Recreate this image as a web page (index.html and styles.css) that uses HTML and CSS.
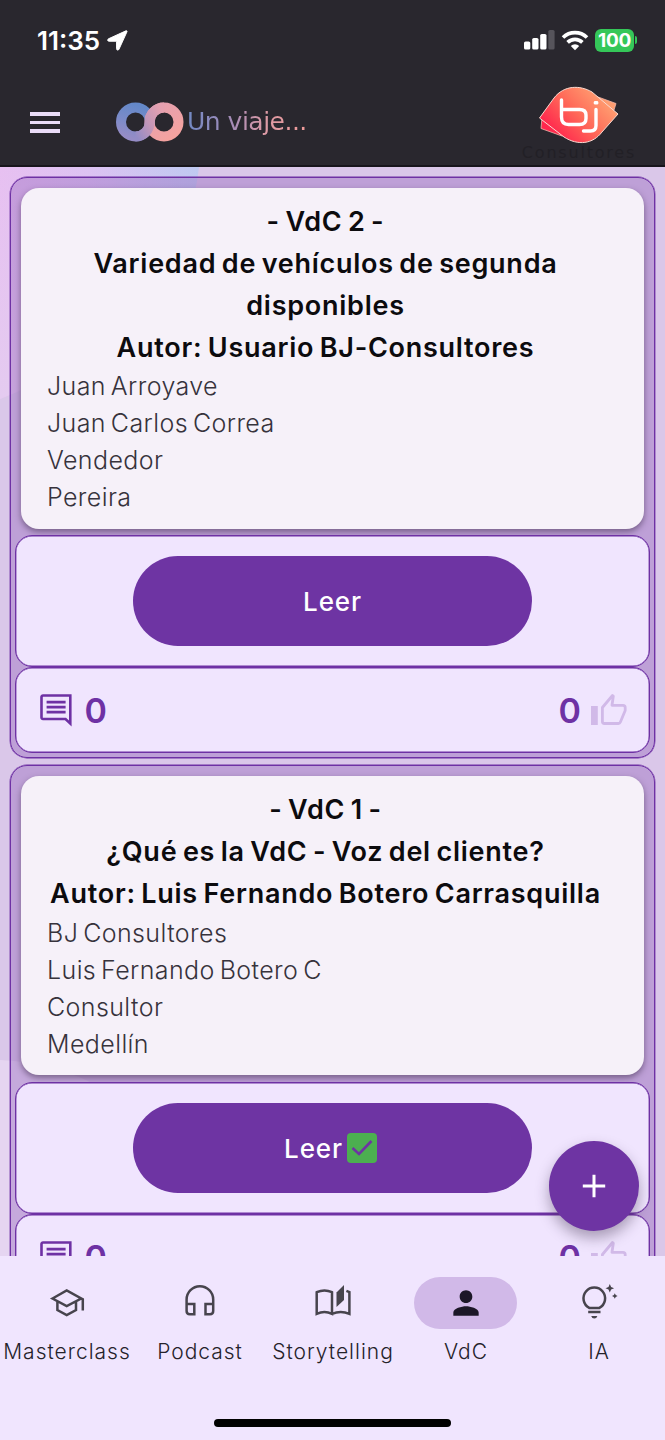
FILE: index.html
```html
<!DOCTYPE html>
<html lang="es">
<head>
<meta charset="utf-8">
<title>VdC</title>
<link rel="stylesheet" href="styles.css">
</head>
<body>
<div class="screen">
  <header class="top">
    <div class="status">
      <span class="time">11:35</span>
      <svg class="loc" width="21" height="21" viewBox="0 0 22 22"><path d="M19.800.9 1.600 9.200c-1.500.8-1.100 2.600.6 2.600h7.200q.6 0 .6.600v7.200c0 1.700 1.900 2 2.600.5L20.900 1.900c.4-.8-.3-1.400-1.100-1z" fill="#fff" stroke="#fff" stroke-width="1"/></svg>
      <span class="grow"></span>
      <svg class="signal" width="31" height="20" viewBox="0 0 31 20"><g fill="#fff"><rect x="0" y="11.500" width="6.300" height="8" rx="1.600"/><rect x="8.200" y="8" width="6.300" height="11.500" rx="1.600"/><rect x="16.200" y="4" width="6.300" height="15.500" rx="1.600"/></g><rect x="24.300" y="0" width="6.300" height="19.500" rx="1.600" fill="#56545b"/></svg>
      <svg class="wifi" width="28" height="21" viewBox="0 0 28 21"><g fill="none" stroke="#fff" stroke-width="3.600"><path d="M2 7.600a17 17 0 0 1 24 0"/><path d="M6.600 12.400a10.500 10.500 0 0 1 14.800 0"/></g><path d="M14 20.300 9.800 16a6 6 0 0 1 8.400 0z" fill="#fff"/></svg>
      <span class="battery">100</span><span class="cap"></span>
    </div>
    <div class="bar">
      <div class="menu"><i></i><i></i><i></i></div>
      <svg class="loop" width="68" height="40" viewBox="0 0 68 40">
        <defs>
          <linearGradient id="g0" x1="24" y1="4" x2="14" y2="36" gradientUnits="userSpaceOnUse"><stop offset="0" stop-color="#6488c8"/><stop offset=".5" stop-color="#7a8bc9"/><stop offset="1" stop-color="#968cc6"/></linearGradient>
          <linearGradient id="g1" x1="40" y1="4" x2="60" y2="36" gradientUnits="userSpaceOnUse"><stop offset="0" stop-color="#e5a1b0"/><stop offset="1" stop-color="#f6a29e"/></linearGradient>
          <linearGradient id="g2" x1="18" y1="30" x2="48" y2="12" gradientUnits="userSpaceOnUse"><stop offset="0" stop-color="#948cc6"/><stop offset=".5" stop-color="#c597b8"/><stop offset="1" stop-color="#e5a1b0"/></linearGradient>
        </defs>
        <circle cx="19.500" cy="20" r="14.500" fill="none" stroke="url(#g0)" stroke-width="10"/>
        <circle cx="48" cy="20" r="14.500" fill="none" stroke="url(#g1)" stroke-width="10"/>
        <path d="M19.500 34.500c8 0 14.200-6.500 14.200-14.500S40 5.500 48 5.500" fill="none" stroke="url(#g2)" stroke-width="10"/>
      </svg>
      <span class="brand">Un viaje...</span>
      <span class="grow"></span>
      <div class="logo">
        <svg width="82" height="60" viewBox="0 0 82 60">
          <defs><linearGradient id="g3" x1="18" y1="50" x2="62" y2="8" gradientUnits="userSpaceOnUse"><stop offset="0" stop-color="#ff264d"/><stop offset=".5" stop-color="#ff6858"/><stop offset="1" stop-color="#ff9d70"/></linearGradient></defs>
          <path d="M4 31 56 9.500l22 8-4 13L24 50 3 42.500z" fill="url(#g3)" stroke="#f0b5a8" stroke-width=".8"/>
          <path d="M1.500 32 16 12C26-1 42-1 54 6l26 22-16 18c-9 12-24 14-38 5z" fill="url(#g3)" stroke="#f9d9d0" stroke-width="1"/>
          <g fill="none" stroke="#fff" stroke-width="3.400" stroke-linecap="round" stroke-linejoin="round"><path d="M23.500 14v17q0 7.500 7 7.500h11q6.500 0 6.500-6V29q0-5.500-6.500-5.500H23.500"/><path d="M58 23.500v16q0 5.500-5.500 5.500h-7"/></g><rect x="55.800" y="15" width="4.500" height="3.500" rx="1.300" fill="#fff"/>
        </svg>
        <span class="firm">Consultores</span>
      </div>
    </div>
  </header>

  <main class="feed">
    <svg class="wave" width="665" height="1090" viewBox="0 0 665 1090" preserveAspectRatio="none">
      <defs>
        <linearGradient id="g4" x1="0" y1="0" x2="200" y2="0" gradientUnits="userSpaceOnUse"><stop offset="0" stop-color="#e7c0f1"/><stop offset=".45" stop-color="#dcc2f2"/><stop offset="1" stop-color="#bec9f1"/></linearGradient>
        <linearGradient id="g5" x1="0" y1="0" x2="0" y2="232" gradientUnits="userSpaceOnUse"><stop offset="0" stop-color="#e4cbf0" stop-opacity="0"/><stop offset="1" stop-color="#e4cbf0"/></linearGradient>
      </defs>
      <path d="M0 0h199Q180 160 0 232z" fill="url(#g4)"/><path d="M0 0h199Q180 160 0 232z" fill="url(#g5)"/>
      <path d="M0 893q90 5 140 60t60 137H0z" fill="#e5d5f1"/>
    </svg>

    <article class="card">
      <section class="info">
        <h2>- VdC 2 -<br>Variedad de vehículos de segunda<br>disponibles<br>Autor: Usuario BJ-Consultores</h2>
        <p>Juan Arroyave</p><p>Juan Carlos Correa</p><p>Vendedor</p><p>Pereira</p>
      </section>
      <section class="action"><a class="read">Leer</a></section>
      <section class="meta">
        <svg class="note" width="33" height="33" viewBox="0 0 33 33"><path d="M3 1.500h27.300v28L25.500 25H3a1.500 1.500 0 0 1-1.500-1.500V3A1.500 1.500 0 0 1 3 1.500zM6.600 8.100h19M6.600 13.100h19M6.600 18.100h19" fill="none" stroke="#6e31a4" stroke-width="2.600"/></svg>
        <b>0</b><span class="grow"></span><b>0</b>
        <svg class="like" width="36" height="32" viewBox="0 0 36 32"><path d="M0 13h6.800v19H0z" fill="#d1b9e8"/><path d="M11.400 14.500 21.500 2.500l.8.800-1.300 9H32q2.200 0 2.200 2.200v3l-4.800 11.500q-.6 1.500-2 1.500H13.500q-2.100 0-2.100-2z" fill="none" stroke="#d1b9e8" stroke-width="2.800" stroke-linejoin="round"/></svg>
      </section>
    </article>

    <article class="card">
      <section class="info second">
        <h2>- VdC 1 -<br>¿Qué es la VdC - Voz del cliente?<br>Autor: Luis Fernando Botero Carrasquilla</h2>
        <p>BJ Consultores</p><p>Luis Fernando Botero C</p><p>Consultor</p><p>Medellín</p>
      </section>
      <section class="action"><a class="read">Leer<svg class="done" width="30" height="30" viewBox="0 0 30 30"><rect width="30" height="30" rx="4" fill="#4caf50"/><path d="m5.500 15 6.500 6L24.500 8" fill="none" stroke="#6e34a3" stroke-width="2.600"/></svg></a></section>
      <section class="meta">
        <svg class="note" width="33" height="33" viewBox="0 0 33 33"><path d="M3 1.500h27.300v28L25.500 25H3a1.500 1.500 0 0 1-1.500-1.500V3A1.500 1.500 0 0 1 3 1.500zM6.600 8.100h19M6.600 13.100h19M6.600 18.100h19" fill="none" stroke="#6e31a4" stroke-width="2.600"/></svg>
        <b>0</b><span class="grow"></span><b>0</b>
        <svg class="like" width="36" height="32" viewBox="0 0 36 32"><path d="M0 13h6.800v19H0z" fill="#d1b9e8"/><path d="M11.400 14.500 21.500 2.500l.8.800-1.300 9H32q2.200 0 2.200 2.200v3l-4.800 11.500q-.6 1.500-2 1.500H13.500q-2.100 0-2.100-2z" fill="none" stroke="#d1b9e8" stroke-width="2.800" stroke-linejoin="round"/></svg>
      </section>
    </article>

    <div class="fab"><svg width="24" height="24" viewBox="0 0 24 24"><path d="M12 .8v22.400M.8 12h22.400" stroke="#fff" stroke-width="3"/></svg></div>
  </main>

  <nav class="tabs">
    <a class="tab"><span class="pill"><svg class="line" width="38" height="38" viewBox="0 0 38 38"><path d="M4.500 14.500 18.700 6.500l14.500 8-14.500 7.500zM9.400 17.500V26l9.300 5 9.300-5v-8.500M32.500 14.200l2.300 1V26.500"/></svg></span>Masterclass</a>
    <a class="tab"><span class="pill"><svg class="line" width="38" height="38" viewBox="0 0 38 38"><path d="M5.600 20V15.500a13.300 13.300 0 0 1 26.600 0V27q0 3.200-3.200 3.200h-4.500V20h7.700M5.600 19.500V27q0 3.200 3.200 3.200h4.500V20H5.600"/></svg></span>Podcast</a>
    <a class="tab"><span class="pill"><svg class="line" width="38" height="38" viewBox="0 0 38 38"><path d="M2.700 29.800V8.200Q10.500 4.800 18 8.200v21.600Q10.500 26.300 2.700 29.800zM18 29.800q8.700-3.500 17.400 0V8l-3-1.200"/><path d="M30 1 22.500 8.500V23l7.500-7z" fill="#47444d" stroke="none"/></svg></span>Storytelling</a>
    <a class="tab"><span class="pill on"><svg width="38" height="38" viewBox="0 0 24 24"><path d="M12 12c2.210 0 4-1.790 4-4s-1.790-4-4-4-4 1.790-4 4 1.790 4 4 4zm0 2c-2.670 0-8 1.340-8 4v2h16v-2c0-2.660-5.330-4-8-4z"/></svg></span>VdC</a>
    <a class="tab"><span class="pill"><svg class="line" width="38" height="38" viewBox="0 0 38 38"><path d="M9.200 23.900a10.800 10.800 0 1 1 10.200 0zM8.200 28h12.300"/><path d="M11.200 32h6.200q-.8 2.500-3.100 2.500T11.200 32zM29.800 0l1.300 3 3 1.300-3 1.300-1.300 3-1.300-3-3-1.300 3-1.300zM34.800 9.200l.9 1.900 1.900.9-1.900.9-.9 1.900-.9-1.900-1.900-.9 1.900-.9z" fill="#47444d" stroke="none"/></svg></span>IA</a>
    <span class="home"></span>
  </nav>
</div>
</body>
</html>
```
FILE: styles.css
```css
* { box-sizing: border-box; }
body { margin: 0; font-family: Inter, "Liberation Sans", sans-serif; }
svg { display: block; flex: none; }
.screen { width: 665px; height: 1440px; display: flex; flex-direction: column; overflow: hidden; background: #f0e5fe; }
.grow { flex: 1; }

.top { height: 167px; flex: none; background: #29272e; border-bottom: 2px solid #17151b; }
.status { display: flex; align-items: center; height: 80px; padding: 0 28px 0 37px; }
.time { width: 64px; font-size: 26px; font-weight: 600; color: #fff; white-space: nowrap; }
.loc { margin-left: 6px; }
.signal { margin-right: 6px; }
.wifi { margin-right: 6px; }
.battery { width: 39px; height: 23px; border-radius: 6px; background: #35c759; color: #fff; font-size: 19px; font-weight: 700; letter-spacing: -.3px; line-height: 23px; text-align: center; }
.cap { width: 2px; height: 8px; margin-left: 1px; border-radius: 0 3px 3px 0; background: #35c759; }
.bar { display: flex; align-items: center; height: 85px; padding: 0 28px 0 30px; }
.menu { display: grid; gap: 5px; width: 30px; }
.menu i { height: 3.500px; background: #eadcf8; }
.loop { margin-left: 56px; margin-top: -1px; }
.brand { margin: -2px 0 0 3px; font: 25px/30px "DejaVu Sans", sans-serif; letter-spacing: -.5px; background: linear-gradient(90deg, #7189c4, #a68cb7 38%, #dc9aa5 65%, #f09b99); -webkit-background-clip: text; background-clip: text; color: transparent; }
.logo { display: flex; flex-direction: column; align-items: center; width: 116px; }
.firm { height: 14px; font: 16px/14px "DejaVu Sans", sans-serif; letter-spacing: 1.800px; white-space: nowrap; color: #222026; }

.feed { position: relative; flex: 1; min-height: 0; overflow: hidden; padding: 10px 10px 0; display: flex; flex-direction: column; gap: 7px; background: #dac7e9; }
.wave { position: absolute; left: 0; top: 0; }
.card { position: relative; flex: none; border: 1px solid #6e31a4; border-radius: 17px; padding: 10px 4px 4px; background: rgba(144, 96, 184, .37); box-shadow: 0 0 0 .4px #6e31a4; }
.info { height: 341px; margin: 0 6px 6px; padding: 13px 40px 0 26px; border-radius: 18px; background: #f6f1f9; box-shadow: 0 3px 6px rgba(70, 50, 85, .6); }
.second { height: 299px; margin-bottom: 7px; }
.info h2 { margin: 0 0 -1px; font-size: 27px; font-weight: 600; line-height: 42px; letter-spacing: .740px; word-spacing: -2px; text-align: center; white-space: nowrap; color: #0c0b0e; }
.second h2 { margin-bottom: 0; }
.info p { margin: 0; font-size: 25px; font-weight: 300; line-height: 37px; letter-spacing: .4px; word-spacing: -2.500px; color: #37333c; }
.action, .meta { border: 1px solid #6e31a4; border-radius: 17px; background: #f0e5fe; box-shadow: inset 0 0 0 .4px #6e31a4; }
.action { display: flex; justify-content: center; align-items: center; height: 132px; }
.read { display: flex; align-items: center; justify-content: center; width: 399px; height: 90px; border-radius: 45px; background: #6e34a3; color: #fff; font-size: 26px; font-weight: 500; letter-spacing: .9px; }
.done { margin: -1px 4px 0 4px; }
.meta { display: flex; align-items: center; height: 86px; padding: 0 22px 0 24px; color: #6e31a4; }
.meta b { font-size: 34px; font-weight: 600; }
.note { margin-right: 11.500px; }
.like { margin: -2px 0 0 10px; }
.fab { position: absolute; left: 549px; top: 974px; width: 90px; height: 90px; border-radius: 50%; display: grid; place-items: center; background: #6e34a3; box-shadow: 0 7px 14px rgba(60, 45, 75, .4); }

.tabs { position: relative; height: 184px; flex: none; display: grid; grid-template-columns: repeat(5, 133px); padding-top: 21px; background: #f0e5fe; }
.tab { display: flex; flex-direction: column; align-items: center; gap: 7px; padding-left: 1px; font-size: 21px; font-weight: 300; line-height: 32px; letter-spacing: 1px; color: #25222a; white-space: nowrap; }
.pill { width: 103px; height: 52px; margin-left: -1px; border-radius: 26px; display: grid; place-items: center; }
.line { fill: none; stroke: #47444d; stroke-width: 2.500; }
.on { background: #d1b9e8; fill: #1c1727; }
.home { position: absolute; left: 214px; bottom: 13px; width: 237px; height: 8px; border-radius: 4px; background: #000; }
```
